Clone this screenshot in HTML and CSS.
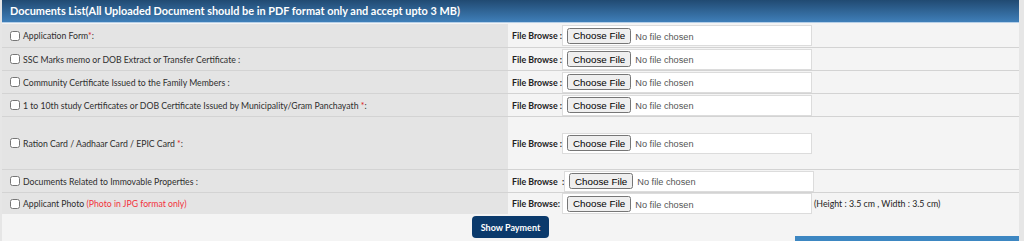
FILE: index.html
```html
<!DOCTYPE html>
<html lang="en">
<head>
    <meta charset="UTF-8">
    <title>Documents List</title>
    <link rel="stylesheet" href="styles.css">
</head>
<body>
    <div class="panel">
        <div class="panel-head">Documents List(All Uploaded Document should be in PDF format only and accept upto 3 MB)</div>
        <table class="docs">
            <tr class="first">
                <td class="doc-name"><label><input type="checkbox"><span>Application Form<span class="req">*</span>:</span></label></td>
                <td class="doc-file">
                    <div class="file-row">
                        <span class="browse">File Browse :</span>
                        <span class="file-box"><input type="file"></span>
                    </div>
                </td>
            </tr>
            <tr>
                <td class="doc-name"><label><input type="checkbox"><span>SSC Marks memo or DOB Extract or Transfer Certificate :</span></label></td>
                <td class="doc-file">
                    <div class="file-row">
                        <span class="browse">File Browse :</span>
                        <span class="file-box"><input type="file"></span>
                    </div>
                </td>
            </tr>
            <tr>
                <td class="doc-name"><label><input type="checkbox"><span>Community Certificate Issued to the Family Members :</span></label></td>
                <td class="doc-file">
                    <div class="file-row">
                        <span class="browse">File Browse :</span>
                        <span class="file-box"><input type="file"></span>
                    </div>
                </td>
            </tr>
            <tr>
                <td class="doc-name"><label><input type="checkbox"><span>1 to 10th study Certificates or DOB Certificate Issued by Municipality/Gram Panchayath <span class="req">*</span>:</span></label></td>
                <td class="doc-file">
                    <div class="file-row">
                        <span class="browse">File Browse :</span>
                        <span class="file-box"><input type="file"></span>
                    </div>
                </td>
            </tr>
            <tr class="tall">
                <td class="doc-name"><label><input type="checkbox"><span>Ration Card / Aadhaar Card / EPIC Card <span class="req">*</span>:</span></label></td>
                <td class="doc-file">
                    <div class="file-row">
                        <span class="browse">File Browse :</span>
                        <span class="file-box"><input type="file"></span>
                    </div>
                </td>
            </tr>
            <tr>
                <td class="doc-name"><label><input type="checkbox"><span>Documents Related to Immovable Properties :</span></label></td>
                <td class="doc-file">
                    <div class="file-row">
                        <span class="browse wide">File Browse&nbsp; :</span>
                        <span class="file-box"><input type="file"></span>
                    </div>
                </td>
            </tr>
            <tr class="last">
                <td class="doc-name"><label><input type="checkbox"><span>Applicant Photo <span class="note-red">(Photo in JPG format only)</span></span></label></td>
                <td class="doc-file">
                    <div class="file-row">
                        <span class="browse">File Browse:</span>
                        <span class="file-box"><input type="file"></span>
                        <span class="size-note">(Height : 3.5 cm , Width : 3.5 cm)</span>
                    </div>
                </td>
            </tr>
        </table>
        <div class="actions">
            <button type="button" class="btn-pay">Show Payment</button>
        </div>
        <div class="next-bar"></div>
    </div>
</body>
</html>
```

FILE: styles.css
```css
html, body {
    margin: 0;
    padding: 0;
    background: #e6e6e6;
    overflow: hidden;
}
body {
    font-family: Lato, 'Open Sans', sans-serif;
    color: #333;
}
.panel {
    width: 1017px;
    height: 241px;
    margin-left: 2px;
    background: #f4f4f4;
}
.panel-head {
    height: 22px;
    line-height: 22px;
    padding-left: 8px;
    background: linear-gradient(#214a72, #3f7fb9);
    border-bottom: 1px solid #b5cfe8;
    color: #fff;
    font-weight: bold;
    font-size: 10.9px;
}
.docs {
    width: 100%;
    border-collapse: collapse;
    margin-top: 1px;
}
.docs td {
    height: 22px;
    padding: 0;
    border-bottom: 1px solid #d3d3d3;
    vertical-align: middle;
}
.docs tr.first td {
    height: 23px;
}
.docs tr.tall td {
    height: 52px;
}
.docs tr.last td {
    border-bottom: none;
    height: 21px;
}
.doc-name {
    width: 498px;
    padding-left: 8px !important;
    background: #e4e4e4;
    font-size: 8.7px;
    color: #2e2e2e;
}
.doc-name label {
    display: flex;
    align-items: center;
    gap: 3px;
    white-space: nowrap;
}
.doc-name input[type=checkbox] {
    width: 10px;
    height: 10px;
    margin: 0;
}
.req {
    color: #e02020;
}
.note-red {
    color: #f2323c;
}
.doc-file {
    padding-left: 4px !important;
    background: #f4f4f4;
}
.file-row {
    display: flex;
    align-items: center;
    height: 21px;
}
.browse {
    flex-shrink: 0;
    width: 50px;
    font-size: 8.8px;
    font-weight: bold;
    color: #222;
    white-space: nowrap;
}
.browse.wide {
    width: 52px;
}
.file-box {
    display: flex;
    align-items: center;
    box-sizing: border-box;
    width: 250px;
    height: 21px;
    padding: 0 4px;
    background: #fff;
    border: 1px solid #dcdcdc;
}
.file-box input {
    font-family: 'Liberation Sans', Arial, sans-serif;
    font-size: 9.2px;
    color: #555;
}
.file-box input::file-selector-button {
    font-family: 'Liberation Sans', Arial, sans-serif;
    font-size: 9.8px;
    height: 16px;
    padding: 0 4px;
    margin-right: 4px;
}
.size-note {
    margin-left: 2px;
    font-size: 8.8px;
    color: #222;
}
.actions {
    display: flex;
    justify-content: center;
    padding-top: 2px;
}
.btn-pay {
    width: 77px;
    height: 22px;
    border: none;
    border-radius: 4px;
    background: #0b3a6c;
    color: #fff;
    font-family: Lato, sans-serif;
    font-weight: bold;
    font-size: 9px;
}
.next-bar {
    margin: -2px 0 0 793px;
    height: 5px;
    background: #3d87c2;
}
```
